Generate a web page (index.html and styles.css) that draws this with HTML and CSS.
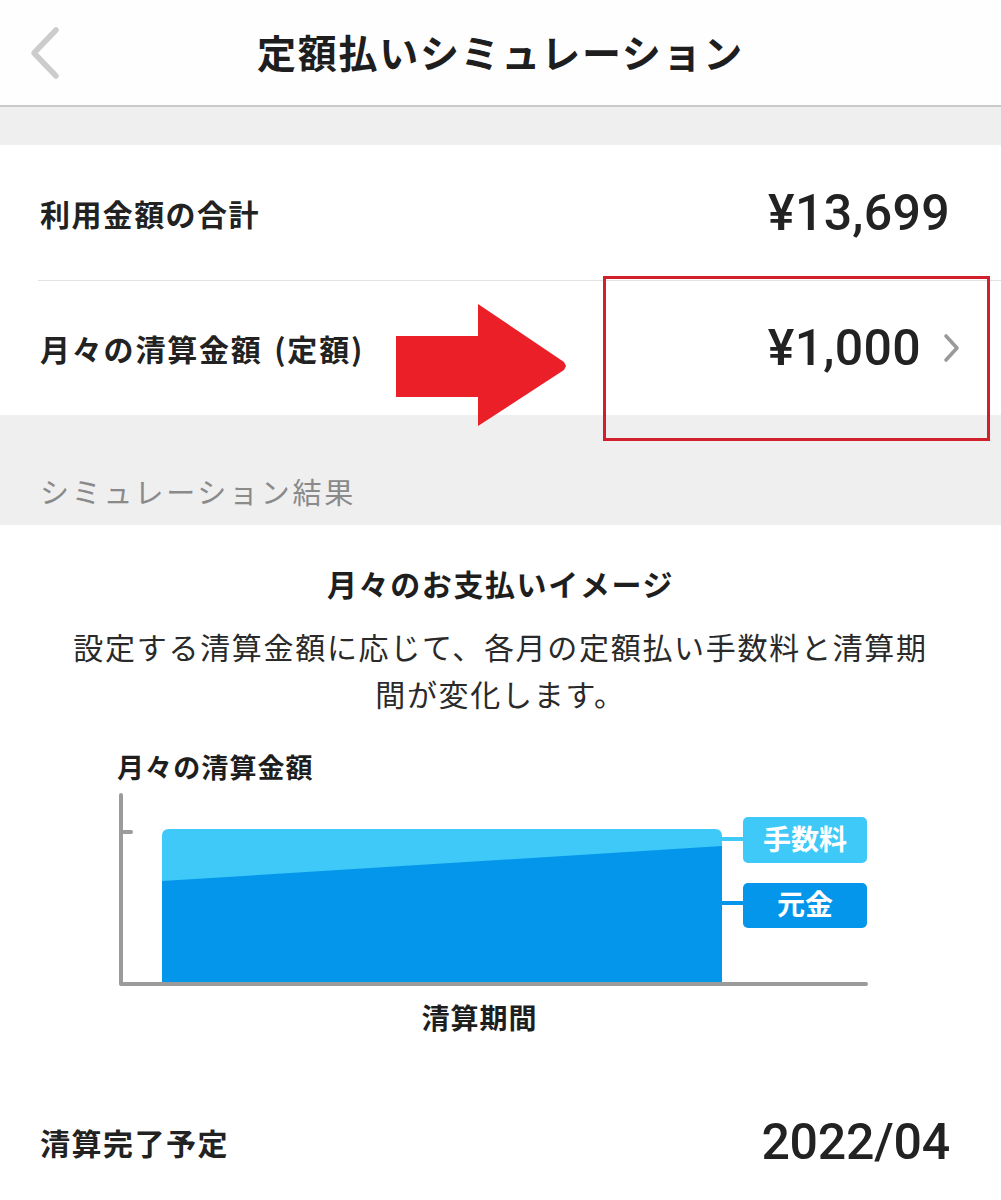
FILE: index.html
```html
<!DOCTYPE html>
<html lang="ja">
<head>
<meta charset="utf-8">
<title>定額払いシミュレーション</title>
<link rel="stylesheet" href="styles.css">
</head>
<body>
<div class="page">
  <header class="nav">
    <div class="nav-left">
      <svg class="back" width="34" height="54" viewBox="0 0 34 54"><polyline points="27,4 5,27 27,50" fill="none" stroke="#cccccc" stroke-width="5.5" stroke-linecap="round" stroke-linejoin="round"/></svg>
    </div>
    <h1 class="nav-title">定額払いシミュレーション</h1>
    <div class="nav-right"></div>
  </header>

  <div class="gap-band"></div>

  <section class="card">
    <div class="row row-top">
      <span class="row-label">利用金額の合計</span>
      <span class="row-value">¥13,699</span>
    </div>
    <div class="row row-link">
      <span class="row-label">月々の清算金額 (定額)</span>
      <span class="row-right">
        <span class="row-value">¥1,000</span>
        <svg class="chev" width="22" height="32" viewBox="0 0 22 32"><polyline points="5,4 16,16 5,28" fill="none" stroke="#9a9a9a" stroke-width="3.6" stroke-linecap="round" stroke-linejoin="round"/></svg>
      </span>
    </div>
  </section>

  <div class="section-band">
    <span class="section-title">シミュレーション結果</span>
  </div>

  <section class="result">
    <h2 class="result-title">月々のお支払いイメージ</h2>
    <p class="result-desc">設定する清算金額に応じて、各月の定額払い手数料と清算期<br>間が変化します。</p>

    <div class="chart-label">月々の清算金額</div>
    <svg class="chart" width="1001" height="200" viewBox="0 0 1001 200">
      <line x1="121" y1="5" x2="121" y2="193" stroke="#9b9b9b" stroke-width="4" stroke-linecap="round"/>
      <line x1="121" y1="42" x2="131" y2="42" stroke="#9b9b9b" stroke-width="4" stroke-linecap="round"/>
      <path d="M162,193 V46 Q162,39 169,39 H715 Q722,39 722,46 V193 Z" fill="#3ec9f8"/>
      <polygon points="162,91 722,56 722,193 162,193" fill="#0496ea"/>
      <line x1="121" y1="194" x2="866" y2="194" stroke="#9b9b9b" stroke-width="4" stroke-linecap="round"/>
      <line x1="722" y1="49" x2="744" y2="49" stroke="#3ec9f8" stroke-width="4"/>
      <line x1="722" y1="113" x2="744" y2="113" stroke="#0496ea" stroke-width="4"/>
      <rect x="743" y="27" width="124" height="46" rx="5" fill="#3ec9f8"/>
      <rect x="743" y="93" width="124" height="45" rx="5" fill="#0496ea"/>
      <text class="legend-text" x="805" y="60" text-anchor="middle">手数料</text>
      <text class="legend-text" x="805" y="125" text-anchor="middle">元金</text>
    </svg>
    <div class="chart-axis-label">清算期間</div>

    <div class="row row-bottom">
      <span class="row-label">清算完了予定</span>
      <span class="row-value big">2022/04</span>
    </div>
  </section>

  <svg class="annot-arrow" width="172" height="124" viewBox="0 0 172 124"><polygon points="0,32 82,32 82,0 168,58 170,62 168,66 82,122 82,93 0,93" fill="#ea1f28"/></svg>
  <div class="annot-box"></div>
</div>
</body>
</html>
```

FILE: styles.css
```css
* { box-sizing: border-box; }
html, body { margin: 0; padding: 0; background: #ffffff; }
body {
  font-family: "Noto Sans CJK JP", "Noto Sans", sans-serif;
  color: #222222;
}
.page {
  position: relative;
  width: 1001px;
  min-height: 1200px;
  overflow: hidden;
}
.nav {
  height: 107px;
  display: grid;
  grid-template-columns: 1fr auto 1fr;
  align-items: center;
  background: #fefefe;
  border-bottom: 2px solid #c9c9c9;
}
.nav-left { padding-left: 29px; display: flex; align-items: center; }
.back { display: block; }
.nav-title {
  margin: 0;
  font-size: 39px;
  font-weight: 700;
  letter-spacing: 1.7px;
  line-height: 50px;
  color: #1e1e1e;
  padding-bottom: 4px;
}
.gap-band { height: 38px; background: #efefef; }
.card { background: #ffffff; }
.row {
  display: flex;
  align-items: center;
  justify-content: space-between;
  margin-left: 38px;
  padding-left: 2px;
}
.row-top {
  height: 136px;
  padding-right: 51px;
  border-bottom: 1px solid #e2e2e2;
}
.row-link {
  height: 134px;
  padding-right: 38px;
}
.row-label {
  font-size: 30px;
  font-weight: 700;
  color: #222222;
  letter-spacing: 1.4px;
}
.row-link .row-label { letter-spacing: 1.8px; word-spacing: 3px; }
.row-value {
  font-family: Roboto, "Liberation Sans", sans-serif;
  font-weight: 500;
  font-size: 50px;
  color: #222222;
  letter-spacing: 0.3px;
}
.row-right { display: flex; align-items: center; gap: 20px; }
.chev { display: block; }
.section-band {
  height: 110px;
  background: #efefef;
  display: flex;
  align-items: flex-end;
  padding: 0 0 14px 40px;
}
.section-title {
  font-size: 29px;
  color: #8a8a8a;
  letter-spacing: 2.7px;
  line-height: 40px;
}
.result { background: #ffffff; padding-top: 38px; }
.result-title {
  margin: 0;
  text-align: center;
  font-size: 30px;
  font-weight: 700;
  line-height: 40px;
  letter-spacing: 1.6px;
  color: #1e1e1e;
}
.result-desc {
  margin: 20px 0 0;
  text-align: center;
  font-size: 30px;
  line-height: 47px;
  letter-spacing: 1.7px;
  color: #2a2a2a;
}
.chart-label {
  margin: 32px 0 0 117px;
  font-size: 27px;
  font-weight: 700;
  line-height: 36px;
  letter-spacing: 1.1px;
  color: #1e1e1e;
}
.chart { display: block; margin-top: 5px; }
.legend-text {
  font-family: "Noto Sans CJK JP", sans-serif;
  font-size: 28px;
  font-weight: 700;
  fill: #ffffff;
}
.chart-axis-label {
  margin-top: 9px;
  padding-right: 42px;
  text-align: center;
  font-size: 28px;
  font-weight: 700;
  line-height: 36px;
  letter-spacing: 1px;
  color: #1e1e1e;
}
.row-bottom {
  height: 80px;
  margin-top: 67px;
  padding-right: 51px;
}
.row-bottom .row-label { letter-spacing: 1.5px; }
.row-value.big { font-size: 50px; letter-spacing: -0.2px; }
.annot-arrow {
  position: absolute;
  left: 396px;
  top: 304px;
  display: block;
}
.annot-box {
  position: absolute;
  left: 603px;
  top: 276px;
  width: 387px;
  height: 165px;
  border: 3px solid #d21f2c;
}
```
